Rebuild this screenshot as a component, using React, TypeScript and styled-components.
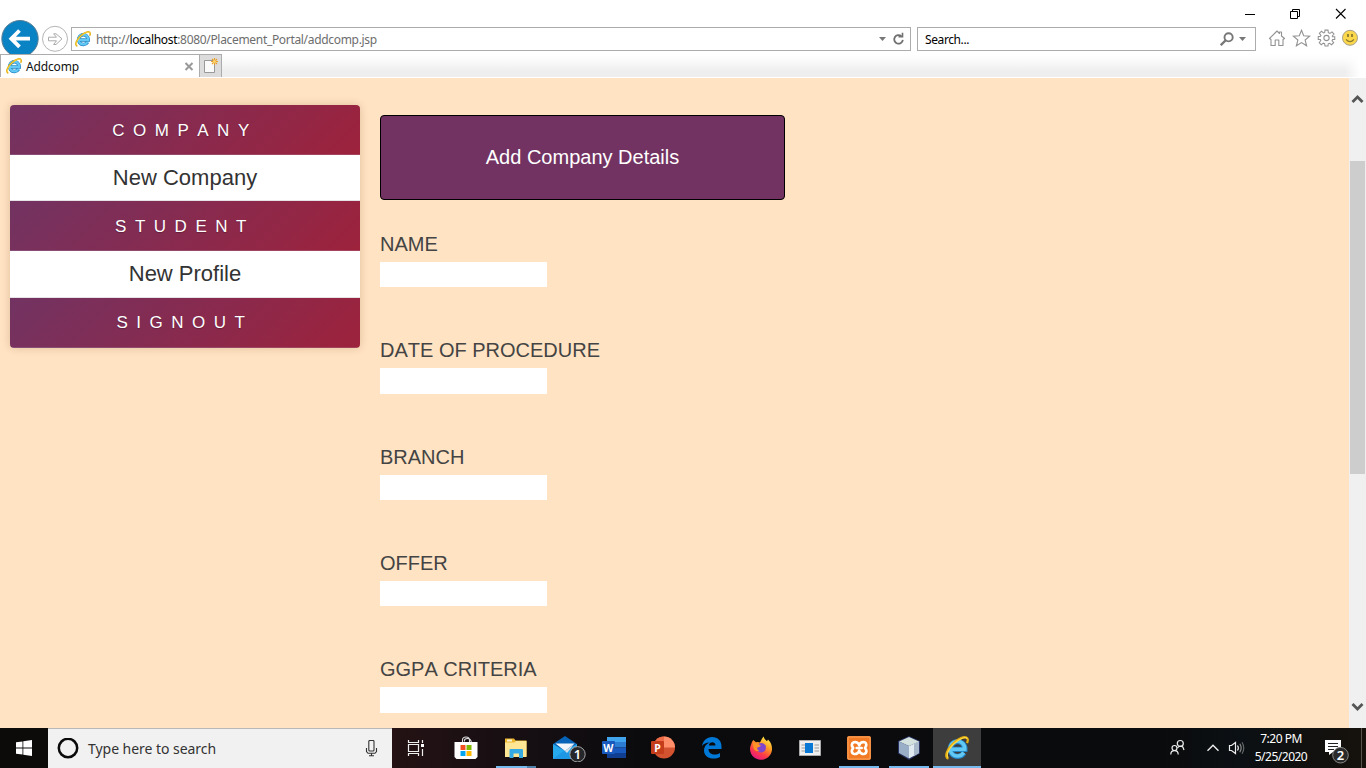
import React from "react";
import styled, { createGlobalStyle, css } from "styled-components";

const ui = `"Noto Sans", "Open Sans", sans-serif`;
const web = `"Liberation Sans", Arial, sans-serif`;

const GlobalStyle = createGlobalStyle`
  * { box-sizing: border-box; }
  body { margin: 0; overflow: hidden; background: #fff; }
  svg { display: block; flex: none; }
`;

const Screen = styled.div`
  width: 1366px;
  height: 768px;
  display: flex;
  flex-direction: column;
  font-family: ${ui};
  overflow: hidden;
`;

/* Browser chrome */
const TitleBar = styled.header`
  height: 27px;
  flex: none;
  display: flex;
  justify-content: flex-end;
  padding: 8px 19px 0 0;
  gap: 32px;
`;
const NavBar = styled.div`
  height: 27px;
  flex: none;
  display: flex;
  align-items: flex-start;
`;
const BackForward = styled.div`
  width: 71px;
  height: 34px;
  margin-top: -7px;
  flex: none;
  overflow: hidden;
`;
const Field = styled.div<{ $w: number }>`
  width: ${(p) => p.$w}px;
  height: 24px;
  border: 1px solid #acacac;
  background: #fff;
  display: flex;
  align-items: center;
  flex: none;
  font-size: 12px;
  color: #000;
`;
const Url = styled.span`
  flex: 1;
  margin-left: 5px;
  color: #6d6d6d;
  white-space: nowrap;
  letter-spacing: -0.32px;
  b { font-weight: 400; color: #000; }
`;
const SearchText = styled.span`
  flex: 1;
  margin-left: 7px;
  letter-spacing: -0.4px;
`;
const Tools = styled.div`
  display: flex;
  gap: 6px;
  margin: 2px 0 0 11px;
`;
const TabRow = styled.div`
  height: 24px;
  flex: none;
  display: flex;
  border-bottom: 1px solid #fff;
  background:
    linear-gradient(to right, rgba(255, 255, 255, 0) 1345px, #fff 1360px),
    linear-gradient(#fff 0, #fafafa 30%, #eeeeee 75%);
`;
const Tab = styled.div`
  width: 200px;
  border: 1px solid #acacac;
  border-bottom: 0;
  background: #fff;
  display: flex;
  align-items: center;
  padding: 0 5px;
  font-size: 12px;
  letter-spacing: -0.15px;
  color: #111;
  span { flex: 1; margin-left: 4px; }
`;
const NewTab = styled.div`
  width: 22px;
  border: 1px solid #acacac;
  border-left: 0;
  border-bottom: 0;
  background: #dcdcdc;
`;

/* Page */
const Viewport = styled.main`
  flex: 1;
  min-height: 0;
  display: flex;
  background: #ffe3c3;
  font-family: ${web};
  font-kerning: none;
`;
const Sidebar = styled.nav`
  width: 350px;
  height: 243px;
  margin: 27px 0 0 10px;
  border-radius: 4px;
  overflow: hidden;
  box-shadow: 0 0 8px rgba(110, 60, 20, 0.22);
  text-align: center;
  flex: none;
`;
const MenuHeader = styled.div`
  height: 50px;
  line-height: 51px;
  font-size: 17px;
  letter-spacing: 0.5em;
  color: #fff;
  text-shadow: 0 1px 1px rgba(0, 0, 0, 0.25);
  background: linear-gradient(135deg, #723362, #9d223c);
  border-bottom: 1px solid rgba(255, 255, 255, 0.14);
  &:last-child { line-height: 50px; }
`;
const MenuItem = styled.div`
  height: 46.25px;
  line-height: 45.5px;
  font-size: 22px;
  color: #333;
  background: #fff;
  border-bottom: 1px solid #e6e3e6;
`;
const Form = styled.form`
  flex: 1;
  padding: 37px 0 0 20px;
  overflow: hidden;
  font-size: 20px;
  color: #444;
`;
const Banner = styled.div`
  width: 405px;
  height: 85px;
  border: 1px solid #000;
  border-radius: 4px;
  background: #723362;
  color: #fff;
  line-height: 82px;
  text-align: center;
  margin-bottom: 33px;
`;
const FormRow = styled.label`
  display: block;
  height: 106.3px;
  line-height: 23px;
`;
const Input = styled.input`
  display: block;
  width: 167px;
  height: 25.4px;
  margin-top: 6px;
  border: 0;
  padding: 0;
  background: #fff;
`;
const Scrollbar = styled.div`
  width: 17px;
  flex: none;
  background: #f0f0f0;
  display: flex;
  flex-direction: column;
  align-items: center;
  justify-content: space-between;
  padding: 16px 0 16px;
`;
const Thumb = styled.div`
  width: 15px;
  height: 313px;
  margin-bottom: auto;
  margin-top: 57px;
  background: #cdcdcd;
`;

/* Taskbar */
const Taskbar = styled.footer`
  height: 40px;
  flex: none;
  display: flex;
  background: linear-gradient(to right, #0d0a0a 0, #0d0a0a 48px, #241214 392px, #180f13 500px, #0b0b0d 640px, #0a0b0c 1160px, #0b1014 1240px, #16110b 1366px);
  color: #fff;
`;
const Start = styled.div`
  width: 48px;
  padding: 12px 0 0 16px;
`;
const SearchBox = styled.div`
  width: 344px;
  background: #f1f1f1;
  border-top: 1px solid #b8b8b8;
  display: flex;
  align-items: center;
  padding: 0 14px 0 9px;
  color: #333;
  font-size: 14px;
  span { flex: 1; margin-left: 9px; letter-spacing: -0.04px; }
`;
const Apps = styled.div`
  display: flex;
  flex: 1;
`;
const TaskButton = styled.div<{ $active?: boolean; $open?: boolean; $grouped?: boolean; $w: number; $indent?: number }>`
  width: ${(p) => p.$w}px;
  padding-left: ${(p) => p.$indent ?? 0}px;
  display: flex;
  align-items: center;
  justify-content: center;
  background-color: ${(p) => (p.$active ? "#3d3d3d" : "transparent")};
  ${(p) =>
    p.$open &&
    css`
      background-image: linear-gradient(to right, #76b9ed 78%, ${p.$grouped ? "#4f82ab" : "#76b9ed"} 78%);
      background-position: center bottom;
      background-size: ${p.$active ? "100%" : "40px"} 2px;
      background-repeat: no-repeat;
    `}
`;
const Tray = styled.div`
  display: flex;
  width: 197px;
  align-items: flex-start;
`;
const Clock = styled.div`
  width: 64px;
  margin-left: -2px;
  font-size: 12px;
  line-height: 18px;
  padding-top: 2px;
  text-align: center;
  letter-spacing: -0.5px;
  white-space: nowrap;
`;
const Notifications = styled.div`
  margin-left: 11px;
`;
const ShowDesktop = styled.div`
  margin-left: auto;
  width: 5px;
  height: 40px;
  border-left: 1px solid #56524c;
`;

const IELogo = ({ size = 16 }: { size?: number }) => (
  <svg width={size} height={size} viewBox="0 0 16 16" fill="none">
    <path d="M4.2 8.9H13.3A4.9 4.9 0 1 0 12.6 11.2" stroke="#2584c4" strokeWidth="3.5" />
    <path d="M4.2 8.8H13.2A4.9 4.9 0 1 0 12.5 11" stroke="#62c8f4" strokeWidth="2.3" />
    <path d="M2.3 15.2C-.8 14.2 1.4 8.5 5.9 4.6C10.4.7 14.8-.5 15.2 2.5C15.3 3.2 15 4 14.7 4.8" stroke="#e5ad10" strokeWidth="1.5" />
    <path d="M2.1 14.4C.5 12.7 2.4 8.3 6.2 5C10 1.6 13.8.2 14.9 1.8" stroke="#ffdc45" strokeWidth=".8" />
  </svg>
);
const DownTriangle = () => (
  <svg width="7" height="4" viewBox="0 0 7 4"><path d="M0 0H7L3.5 4Z" fill="#777" /></svg>
);
const Chevron = ({ down }: { down?: boolean }) => (
  <svg width="13" height="10" viewBox="0 0 13 10">
    <path d={down ? "M1.5 2L6.5 7L11.5 2" : "M1.5 8L6.5 3L11.5 8"} fill="none" stroke="#555" strokeWidth="2.8" />
  </svg>
);

const labels = ["NAME", "DATE OF PROCEDURE", "BRANCH", "OFFER", "GGPA CRITERIA"];

export default function App() {
  return (
    <Screen>
      <GlobalStyle />
      <TitleBar>
        <svg width="12" height="12"><path d="M0 6.5H10" stroke="#000" /></svg>
        <svg width="12" height="12" fill="none" stroke="#000"><path d="M1.5 3.5H8.5V10.5H1.5Z M3.5 3V1.5H10.5V8.5H9" /></svg>
        <svg width="14" height="12"><path d="M3 1L12.5 10.5M12.5 1L3 10.5" stroke="#000" strokeWidth="1.1" /></svg>
      </TitleBar>
      <NavBar>
        <BackForward>
          <svg width="71" height="37" fill="none">
            <circle cx="20" cy="18.7" r="18.2" fill="#0a83c4" stroke="#5a7d92" />
            <path d="M30 18.7H12M19.5 10.5L11.3 18.7L19.5 26.9" stroke="#fff" strokeWidth="3.8" />
            <circle cx="55" cy="18.8" r="12.5" fill="#fff" stroke="#b5b5b5" />
            <path d="M48.5 17.2H56.5L53.6 13.8H56L62 18.8L56 24.5H53.6L56.5 20.8H48.5Z" stroke="#aaa" />
          </svg>
        </BackForward>
        <Field $w={840}>
          <svg width="3" height="16" />
          <IELogo />
          <Url>http://<b>localhost</b>:8080/Placement_Portal/addcomp.jsp</Url>
          <DownTriangle />
          <svg width="24" height="16" fill="none" stroke="#707070">
            <path d="M15.4 5.2A4.3 4.3 0 1 0 16.8 8.8" strokeWidth="1.8" />
            <path d="M12.5 5.8H16.5V1.8" strokeWidth="1.6" />
          </svg>
        </Field>
        <svg width="6" height="24" />
        <Field $w={339}>
          <SearchText>Search...</SearchText>
          <svg width="14" height="14" fill="none" stroke="#777" strokeWidth="1.9">
            <circle cx="8.6" cy="5.3" r="4.1" /><path d="M5.7 8.3L.8 13.2" strokeWidth="2.3" />
          </svg>
          <svg width="5" height="4" />
          <DownTriangle />
          <svg width="9" height="4" />
        </Field>
        <Tools>
          <svg width="19" height="18" fill="none" stroke="#929292" strokeWidth="1.1">
            <path d="M2.5 9.5L10 2L12.5 4.5V3H14.5V7L17.5 9.5L16 10.5V16.5H11.8V11H8.2V16.5H4V10.5Z" strokeLinejoin="round" />
          </svg>
          <svg width="19" height="18" fill="none" stroke="#929292" strokeWidth="1.1">
            <path d="M9.5 1.3L11.7 6.8L17.7 7.2L13.1 11L14.6 16.8L9.5 13.6L4.4 16.8L5.9 11L1.3 7.2L7.3 6.8Z" />
          </svg>
          <svg width="19" height="18" viewBox="0 0 24 24" fill="none" stroke="#929292" strokeWidth="1.4">
            <circle cx="12" cy="12" r="3.5" />
            <path d="M10 1.5H14L14.5 5L16.5 5.9L19.3 3.8L22 6.7L19.7 9.3L20.1 10.2H23V14H20.1L19.4 15.6L21.6 18.2L18.7 21L16 19L14.3 19.7L14 22.7H10L9.5 19.6L7.8 18.9L5 21L2.3 18.2L4.4 15.3L3.8 14H1V10H3.8L4.6 8.4L2.5 5.8L5.3 3L8 5.1L9.6 4.5Z" />
          </svg>
          <svg width="18" height="18">
            <circle cx="8" cy="8.8" r="7.5" fill="#fbd84b" stroke="#a8a08a" />
            <path d="M6 5V8M10 5V8" stroke="#8c792e" strokeWidth="1.8" />
            <path d="M4 10.4Q8 15 12 10.4" fill="none" stroke="#8c792e" strokeWidth="1.2" />
          </svg>
        </Tools>
      </NavBar>
      <TabRow>
        <Tab>
          <IELogo />
          <span>Addcomp</span>
          <svg width="10" height="9"><path d="M1.5 1L8.5 8M8.5 1L1.5 8" stroke="#999" strokeWidth="2" /></svg>
        </Tab>
        <NewTab>
          <svg width="21" height="22">
            <path d="M4.5 5.5H14.5V17.5H4.5Z" fill="#fafafa" stroke="#999" />
            <path d="M14.5 3V10M11 6.5H18M12 4L17 9M17 4L12 9" stroke="#e9a02a" strokeWidth="1.1" />
            <circle cx="14.5" cy="6.5" r="1.5" fill="#ffd36b" />
          </svg>
        </NewTab>
      </TabRow>

      <Viewport>
        <Sidebar>
          <MenuHeader>COMPANY</MenuHeader>
          <MenuItem>New Company</MenuItem>
          <MenuHeader>STUDENT</MenuHeader>
          <MenuItem>New Profile</MenuItem>
          <MenuHeader>SIGNOUT</MenuHeader>
        </Sidebar>
        <Form>
          <Banner>Add Company Details</Banner>
          {labels.map((l) => (
            <FormRow key={l}>{l}<Input /></FormRow>
          ))}
        </Form>
        <Scrollbar>
          <Chevron />
          <Thumb />
          <Chevron down />
        </Scrollbar>
      </Viewport>

      <Taskbar>
        <Start>
          <svg width="16" height="16" fill="#fff"><path d="M0 2.3L6.5 1.4V7.5H0ZM7.3 1.2L16 0V7.5H7.3ZM0 8.4H6.5V14.6L0 13.7ZM7.3 8.4H16V16L7.3 14.8Z" /></svg>
        </Start>
        <SearchBox>
          <svg width="22" height="22"><circle cx="11" cy="10" r="9.2" fill="none" stroke="#0a0a0a" strokeWidth="2.5" /></svg>
          <span>Type here to search</span>
          <svg width="13" height="18" fill="none" stroke="#333" strokeWidth="1.1">
            <rect x="3.8" y=".5" width="5.2" height="10.5" rx="1" /><path d="M1.5 8V11.5L3 13.3H10L11.5 11.5V8M6.5 13.3V15.8M4 15.8H9" />
          </svg>
        </SearchBox>
        <Apps>
          <TaskButton $w={49}>
            <svg width="20" height="18" fill="none" stroke="#eee" strokeWidth="1.2">
              <path d="M1.5 1V3.5H11.5V1M1.5 5.5H11.5V12.5H1.5ZM1.5 17V14.5H11.5V17M15.5 1V4M15.5 10V17" /><path d="M14 5H17V8H14Z" fill="#fff" stroke="none" />
            </svg>
          </TaskButton>
          <TaskButton $w={50}>
            <svg width="24" height="24">
              <path d="M8.5 7V4Q8.5 1 12 1T15.5 4V7M10.5 5.5Q10 2.5 13.5 2.5T17.5 7" fill="none" stroke="#ddd" strokeWidth="1.1" />
              <path d="M.5 6H23.5V21L21.5 23H2.5L.5 21Z" fill="#fff" />
              <path d="M6.5 9H11.5V14H6.5Z" fill="#f25022" /><path d="M12.5 9H17.5V14H12.5Z" fill="#7fba00" /><path d="M6.5 15H11.5V20H6.5Z" fill="#00a4ef" /><path d="M12.5 15H17.5V20H12.5Z" fill="#ffb900" />
            </svg>
          </TaskButton>
          <TaskButton $w={49} $open $grouped>
            <svg width="24" height="24">
              <path d="M1 2.5H10L11.5 4.5H22.5V20.5H1Z" fill="#ecb52b" /><path d="M3 3.5H8V5.5H3Z" fill="#f9f1d3" /><path d="M1 6.5H10L12 5H22.5V21H1Z" fill="#ffe694" />
              <path d="M5.5 22V14Q5.5 13 6.5 13H18Q19 13 19 14V22H15V17.5H9.5V22Z" fill="#35a9e2" />
            </svg>
          </TaskButton>
          <TaskButton $w={50} $indent={8}>
            <svg width="34" height="28">
              <path d="M1 10L13 2L25 10V25H1Z" fill="#0763b7" /><path d="M1 10L13 17L25 10V25H1Z" fill="#27a9ed" /><path d="M1 25L13 16L25 25Z" fill="#1e98e4" /><path d="M3.5 9.5H22.5L13 17Z" fill="#f2f6fa" /><path d="M13 17L22.5 9.5L15 19Z" fill="#d5dde5" />
              <circle cx="25.5" cy="20.3" r="7.7" fill="#25272a" stroke="#a6a6a6" /><text x="25.5" y="25" textAnchor="middle" fontSize="13" fontWeight="600" fill="#fff">1</text>
            </svg>
          </TaskButton>
          <TaskButton $w={48}>
            <svg width="24" height="24">
              <path d="M5 1H24V6H5Z" fill="#41a5ee" /><path d="M5 6H24V11.5H5Z" fill="#2b7cd3" /><path d="M5 11.5H24V17H5Z" fill="#185abd" /><path d="M5 17H24V22H5Z" fill="#103f91" /><rect y="5" width="13" height="13" rx="1" fill="#185abd" />
              <text x="6.3" y="15.5" textAnchor="middle" fontSize="10.5" fontWeight="700" fill="#fff">W</text>
            </svg>
          </TaskButton>
          <TaskButton $w={50}>
            <svg width="24" height="24">
              <circle cx="13" cy="11.5" r="11" fill="#d35230" /><path d="M13 .5A11 11 0 0 1 24 11.5H13Z" fill="#ff8f6b" /><path d="M2 11.5A11 11 0 0 1 13 .5V11.5Z" fill="#ed6c47" /><rect y="5" width="13" height="13" rx="1" fill="#c43e1c" />
              <text x="6.5" y="15.5" textAnchor="middle" fontSize="10.5" fontWeight="700" fill="#fff">P</text>
            </svg>
          </TaskButton>
          <TaskButton $w={48}>
            <svg width="22" height="24">
              <path d="M1 10C2 4.5 6 1 11 1C17 1 20.5 5 20.5 10.5V13H7.5C7.7 19.5 15 19.5 19 17V21C12 24.5 3 22 3 14.5C3 11 5 8 8.5 6.5C5 6.5 2.5 8 1 10ZM7.8 9.5H14.5C14.5 5.5 8.5 5 7.8 9.5Z" fill="#0078d7" fillRule="evenodd" />
            </svg>
          </TaskButton>
          <TaskButton $w={50}>
            <svg width="24" height="24">
              <defs><linearGradient id="fx" x1=".8" y1="0" x2=".25" y2="1"><stop stopColor="#fff44f" /><stop offset=".38" stopColor="#ff9a22" /><stop offset=".7" stopColor="#ff3a48" /><stop offset="1" stopColor="#e31587" /></linearGradient></defs>
              <path d="M4.2 4L7 6.3Q9 5.5 11 6.4Q12.5 3 14.5 .5Q15.2 3.5 18 5.2L19 3.5Q23 7.5 23 12.5A11 10.7 0 1 1 2.2 8.2Q2.7 6 4.2 4Z" fill="url(#fx)" />
              <path d="M8 8.7Q13 4.8 16.7 9.5Q18 16 12 16.5Q7 16 6.5 11.8L10.5 10.5Z" fill="#8045cc" /><path d="M4 7Q9 6.5 12 9.8Q10 11.4 8 11.7Q8 14 10.5 15Q6 16 4.5 12Z" fill="#ff9328" />
            </svg>
          </TaskButton>
          <TaskButton $w={48}>
            <svg width="22" height="18">
              <path d="M.5 1.5H21.5V16.5H.5Z" fill="#eee" stroke="#aaa" /><path d="M2.5 6H6M2.5 9H6M2.5 12H6M15.5 6H20M15.5 9H20M15.5 12H20" stroke="#999" /><path d="M6 4H14V14H6Z" fill="#0878d4" />
            </svg>
          </TaskButton>
          <TaskButton $w={50} $open>
            <svg width="24" height="24">
              <rect width="24" height="24" rx="2" fill="#f27a24" /><path d="M1 1H23V23H1Z" fill="none" stroke="#fbae72" strokeWidth=".8" />
              <path d="M12.2 9.3C11.5 6.4 8.8 5.6 6.8 6.3C4.4 7.2 4.4 10 5.8 11.2Q6.6 12 5.8 12.8C4.2 14.5 4.6 17.1 6.6 17.8C9 18.5 11.5 17.4 12.2 14.7C13 17.4 15.5 18.5 17.6 17.8C19.8 16.9 19.9 14.3 18.4 12.8Q17.6 12 18.4 11.2C19.8 9.5 19.6 7 17.6 6.3C15.3 5.6 13 6.4 12.2 9.3ZM9.7 12H14.7" fill="none" stroke="#fff" strokeWidth="2.7" strokeLinejoin="round" strokeLinecap="round" />
            </svg>
          </TaskButton>
          <TaskButton $w={49} $open>
            <svg width="26" height="26">
              <path d="M13 1L24 6V18.5L13 25L2 18.5V6Z" fill="#27305e" /><path d="M13 2L23 6.5L13 11L3 6.5Z" fill="#d4e2df" /><path d="M3 6.5L13 11V23.5L3 18Z" fill="#99aec7" /><path d="M23 6.5L13 11V23.5L23 18Z" fill="#e0eaf1" /><path d="M18 9L23 6.5V18L18 21Z" fill="#a6b8ca" />
            </svg>
          </TaskButton>
          <TaskButton $w={48} $open $active><IELogo size={24} /></TaskButton>
        </Apps>
        <Tray>
          <svg width="82" height="40" fill="none" stroke="#eee" strokeWidth="1.2">
            <circle cx="11.3" cy="15.5" r="3" /><path d="M8.5 19.8Q11.3 16.8 14 19.3L15 22" /><circle cx="5.5" cy="20" r="2.5" /><path d="M1.8 26.5Q1.8 22.7 5.5 22.7T9.2 26.5" />
            <path d="M38.5 22.8L44 17.3L49.5 22.8" strokeWidth="1.4" />
            <path d="M60.5 17.5H62.5L66.5 14.5V25.5L62.5 22.5H60.5Z" /><path d="M68.5 17.5Q70.2 20 68.5 22.5" /><path d="M70.8 15.8Q73.5 20 70.8 24.2" stroke="#888" /><path d="M73 14.3Q76.5 20 73 25.7" stroke="#666" />
          </svg>
          <Clock>7:20 PM<br />5/25/2020</Clock>
          <Notifications>
            <svg width="30" height="40">
              <path d="M1 12H17V24H9L5 27V24H1Z" fill="#fff" /><path d="M4 15.5H14M4 18.5H14M4 21.5H10" stroke="#222" />
              <circle cx="16.5" cy="27.2" r="7.8" fill="#2a2a2a" stroke="#888" /><text x="16.5" y="31.8" textAnchor="middle" fontSize="13" fontWeight="600" fill="#fff">2</text>
            </svg>
          </Notifications>
          <ShowDesktop />
        </Tray>
      </Taskbar>
    </Screen>
  );
}
